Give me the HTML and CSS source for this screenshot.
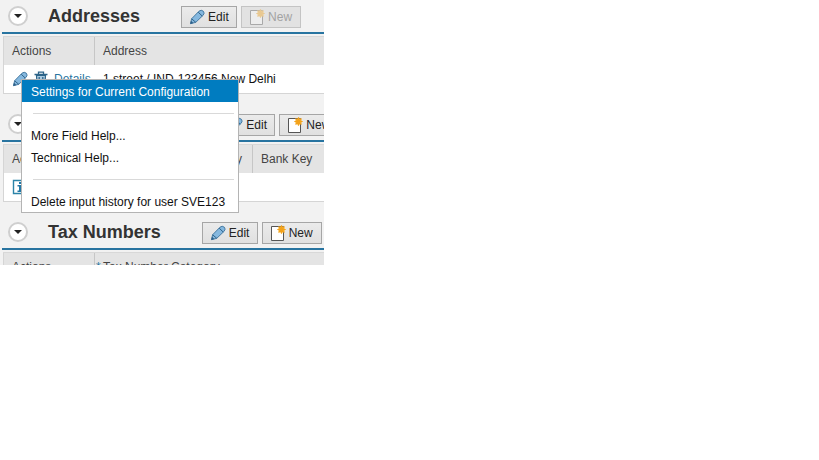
FILE: index.html
```html
<!DOCTYPE html>
<html lang="en">
<head>
<meta charset="utf-8">
<title>Business Partner</title>
<link rel="stylesheet" href="styles.css">
</head>
<body>
<svg class="defs" aria-hidden="true">
  <symbol id="pencil" viewBox="0 0 16 16">
    <path d="M1.500 14.700 2.600 9.800 10 2.200Q12.200 .3 14.300 2.200Q16 4 14.200 6.200L6.800 13.300Z" fill="#85b8df" stroke="#477ba3" stroke-width="1"/>
    <path d="M2.600 9.800 6.800 13.300M9.200 3.200 13.200 7" fill="none" stroke="#2f6389" stroke-width="1"/>
    <path d="M1.200 15 2 11.800 4.300 14Z" fill="#2d5f87"/>
  </symbol>
  <symbol id="trash" viewBox="0 0 14 16">
    <path d="M2.500 4.500h9l-.7 10.500H3.200Z" fill="#a9cae0" stroke="#2d6489" stroke-width="1.200"/>
    <path d="M.5 3.500h13M4.500 3V1.200h5V3M5.200 6v7M8.800 6v7" fill="none" stroke="#2d6489" stroke-width="1.300"/>
  </symbol>
  <symbol id="page" viewBox="0 0 16 17">
    <path d="M1.500 1.500h12v14h-12z" fill="#fff" stroke="#555"/>
    <circle cx="11.500" cy="4.500" r="3.200" fill="#f8b12c"/>
    <path d="M11.500 .3v8.400M7.300 4.500h8.400M8.500 1.500l6 6M14.500 1.500l-6 6" stroke="#f3a21b" stroke-width="1.200"/>
  </symbol>
  <symbol id="info" viewBox="0 0 16 16">
    <path d="M1.500 1.500h14v13h-14z" fill="#fff" stroke="#2b83a8" stroke-width="1.400"/>
    <path d="M7 3h3v2H7zM5.500 6h4.500V11.500h1.500V13h-6v-1.500H7V7.500H5.500z" fill="#2277a5"/>
  </symbol>
</svg>
<main class="panel">
  <section>
    <header class="bar bar-first">
      <button class="toggle" aria-label="Collapse Addresses"></button>
      <h2>Addresses</h2>
      <button class="btn"><svg class="icon"><use href="#pencil"/></svg>Edit</button>
      <button class="btn btn-new" disabled><svg class="icon page"><use href="#page"/></svg>New</button>
    </header>
    <table>
      <colgroup><col class="c-actions"><col></colgroup>
      <thead><tr><th>Actions</th><th>Address</th></tr></thead>
      <tbody><tr>
        <td><div class="actions">
          <svg class="icon"><use href="#pencil"/></svg>
          <svg class="icon trash"><use href="#trash"/></svg>
          <a href="#">Details</a>
        </div></td>
        <td>1 street / IND-123456 New Delhi</td>
      </tr></tbody>
    </table>
  </section>
  <section>
    <header class="bar">
      <button class="toggle" aria-label="Collapse Bank Accounts"></button>
      <h2>Bank Accounts</h2>
      <button class="btn"><svg class="icon"><use href="#pencil"/></svg>Edit</button>
      <button class="btn btn-new"><svg class="icon page"><use href="#page"/></svg>New</button>
    </header>
    <table>
      <colgroup><col class="c-actions"><col class="c-id"><col class="c-country"><col></colgroup>
      <thead><tr><th>Actions</th><th>ID</th><th>Country</th><th>Bank Key</th></tr></thead>
      <tbody><tr>
        <td><div class="actions"><svg class="icon"><use href="#info"/></svg></div></td>
        <td></td><td></td><td></td>
      </tr></tbody>
    </table>
  </section>
  <section>
    <header class="bar">
      <button class="toggle" aria-label="Collapse Tax Numbers"></button>
      <h2>Tax Numbers</h2>
      <button class="btn"><svg class="icon"><use href="#pencil"/></svg>Edit</button>
      <button class="btn btn-new"><svg class="icon page"><use href="#page"/></svg>New</button>
    </header>
    <table>
      <colgroup><col class="c-actions"><col></colgroup>
      <thead><tr><th>Actions</th><th class="required">Tax Number Category</th></tr></thead>
    </table>
  </section>
  <div class="menu" role="menu">
    <button class="item selected" role="menuitem">Settings for Current Configuration</button>
    <hr>
    <button class="item" role="menuitem">More Field Help...</button>
    <button class="item" role="menuitem">Technical Help...</button>
    <hr>
    <button class="item" role="menuitem">Delete input history for user SVE123</button>
  </div>
</main>
</body>
</html>
```
FILE: styles.css
```css
* { box-sizing: border-box; }
body {
  margin: 0;
  background: #fff;
  font: 12px/16px "Liberation Sans", Arial, sans-serif;
  color: #111;
}
button { font: inherit; color: inherit; }
.defs { position: absolute; width: 0; height: 0; }
.panel {
  position: relative;
  max-width: 324px;
  max-height: 265px;
  overflow: hidden;
  padding-left: 2px;
  background: #f2f2f2;
}
.bar {
  display: flex;
  align-items: center;
  padding: 16px 0 2px 6px;
  border-bottom: 2px solid #2874a0;
  margin-bottom: 2px;
  height: 48px;
}
.bar-first { padding-top: 2px; height: 34px; }
.toggle {
  flex: none;
  display: grid;
  place-items: center;
  width: 20px;
  height: 20px;
  margin-right: 20px;
  padding: 0;
  border: 2px solid #cfcfcf;
  border-radius: 50%;
  background: #fff;
}
.toggle::before {
  content: "";
  border: 4px solid transparent;
  border-top-color: #222;
  border-bottom: 0;
}
h2 {
  flex: none;
  margin: 0 41px 0 0;
  font-size: 18px;
  line-height: 24px;
  color: #333;
}
.btn {
  flex: none;
  display: flex;
  align-items: center;
  gap: 3px;
  width: 56px;
  height: 22px;
  margin: 2px 4px 0 0;
  padding: 0 0 0 7px;
  border: 1px solid #a6a6a6;
  background: linear-gradient(#ebebeb, #e0e0e0);
  color: #222;
}
.btn-new { width: 60px; margin-right: 0; }
.btn:disabled { border-color: #c4c4c4; background: #e2e2e2; color: #a3a3a3; }
.btn:disabled .icon { opacity: .4; }
.icon { flex: none; display: block; width: 16px; height: 16px; }
.page { height: 17px; }
.trash { width: 14px; }
table {
  width: calc(100% - 1px);
  margin-left: 1px;
  table-layout: fixed;
  border-collapse: separate;
  border-spacing: 0;
  background: #fff;
  border-top: 1px solid #d8d8d8;
}
.c-actions { width: 92px; }
.c-id { width: 97px; }
.c-country { width: 61px; }
th, td {
  height: 28px;
  padding: 0 0 0 8px;
  text-align: left;
  font-weight: normal;
  white-space: nowrap;
}
th {
  background: #e4e4e4;
  color: #444;
  border-right: 1px solid #c6c6c6;
}
th:last-child { border-right: 0; }
th:first-child, td:first-child { border-left: 1px solid #d5d5d5; }
td { height: 29px; border-bottom: 1px solid #d5d5d5; }
.required::before {
  content: "*";
  display: inline-block;
  width: 7px;
  margin-left: -7px;
  color: #2874a0;
}
.actions { display: flex; align-items: center; gap: 6px; }
a { color: #2874a0; text-decoration: none; }
.menu {
  position: absolute;
  top: 79px;
  left: 21px;
  width: 218px;
  border: 1px solid #b4b4b4;
  background: #fff;
}
.item {
  display: block;
  width: 100%;
  height: 22px;
  padding: 2px 0 0 9px;
  border: 0;
  background: none;
  text-align: left;
  white-space: nowrap;
}
.selected { background: #007cc0; color: #fff; }
hr {
  height: 1px;
  margin: 11px 4px 10px 11px;
  border: 0;
  background: #d9d9d9;
}
```
